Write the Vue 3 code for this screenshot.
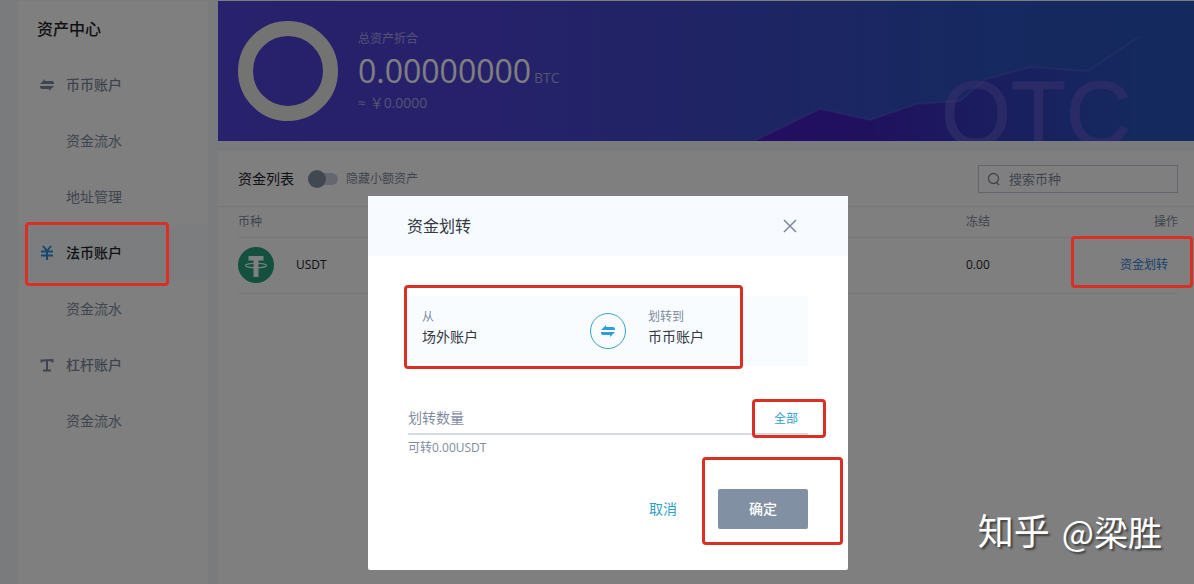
<script setup>
import { ref } from 'vue'

const menu = [
  { label: '币币账户', icon: 'swap', main: true },
  { label: '资金流水' },
  { label: '地址管理' },
  { label: '法币账户', icon: 'yen', main: true, active: true },
  { label: '资金流水' },
  { label: '杠杆账户', icon: 'lever', main: true },
  { label: '资金流水' },
]
const hideSmall = ref(false)
const keyword = ref('')
const amount = ref('')
</script>

<template>
  <div class="page">
    <nav class="sidebar" aria-label="资产中心">
      <h1 class="side-title">资产中心</h1>
      <a
        v-for="(item, i) in menu"
        :key="i"
        href="#"
        class="side-item"
        :class="{ main: item.main, active: item.active }"
      >
        <span class="side-icon">
          <svg v-if="item.icon === 'swap'" width="14" height="14" viewBox="0 0 14 14" fill="currentColor">
            <path d="M0 6 5 1v2h7Q14 3 14 5v1zM14 8 9 13v-2H2Q0 11 0 9V8z" />
          </svg>
          <svg v-else-if="item.icon === 'yen'" width="14" height="16" viewBox="0 0 14 16" fill="none" stroke="currentColor" stroke-width="2">
            <path d="M3 1l4 5 4-5M7 6v9M1 6.500h12M1 10.500h12" />
          </svg>
          <svg v-else-if="item.icon === 'lever'" width="14" height="14" viewBox="0 0 14 14" fill="none" stroke="currentColor" stroke-width="2">
            <path d="M1.500 4.500V2.500L12.500 2v2.500M7 2v10.500M3 12.500h8" />
          </svg>
        </span>
        <span>{{ item.label }}</span>
        <i v-if="item.active" class="ring ring-menu"></i>
      </a>
    </nav>

    <main class="content">
      <section class="banner">
        <svg class="trend" width="440" height="140" viewBox="0 0 440 140" aria-hidden="true">
          <defs>
            <linearGradient id="area" x1="0" x2="1" y1="0" y2="0">
              <stop offset="0" stop-color="#4a1cc4" />
              <stop offset="0.3" stop-color="#4020bc" stop-opacity="0.95" />
              <stop offset="1" stop-color="#3a2cc0" stop-opacity="0" />
            </linearGradient>
          </defs>
          <path d="M0 140 66 108 116 119 163 103 206 100 230 79 276 66 334 70 386 35V140z" fill="url(#area)" />
          <text x="187" y="144" font-size="90" fill="#5a58d0" stroke="#5a58d0" stroke-width="1" opacity="0.85">OTC</text>
          <path d="M0 140 66 108 116 119 163 103 206 100 230 79 276 66 334 70 386 35" fill="none" stroke="#a090ff" stroke-opacity="0.17" stroke-width="2" />
        </svg>
        <div class="donut"></div>
        <div class="totals">
          <div class="total-label">总资产折合</div>
          <div class="total-value">0.00000000<small>BTC</small></div>
          <div class="total-fiat">≈ ￥0.0000</div>
        </div>
      </section>

      <section class="panel">
        <div class="toolbar">
          <h2>资金列表</h2>
          <label class="switch">
            <input v-model="hideSmall" type="checkbox" />
            <span>隐藏小额资产</span>
          </label>
          <label class="search">
            <svg width="14" height="14" viewBox="0 0 14 14" fill="none" stroke="currentColor" stroke-width="1.300">
              <circle cx="6.500" cy="6.500" r="5" /><path d="M9 10l3 3" />
            </svg>
            <input v-model="keyword" type="text" placeholder="搜索币种" aria-label="搜索币种" />
          </label>
        </div>
        <table>
          <thead>
            <tr><th>币种</th><th class="frozen">冻结</th><th class="action">操作</th></tr>
          </thead>
          <tbody>
            <tr>
              <td>
                <div class="coin">
                  <svg width="36" height="36" viewBox="0 0 36 36">
                    <circle cx="18" cy="18" r="18" fill="#26a17b" />
                    <path d="M10.500 9h15v4.500H20.500V30h-5V13.500h-5z" fill="#fff" />
                    <ellipse cx="18" cy="18.500" rx="10.500" ry="2.300" fill="none" stroke="#fff" stroke-width="1.100" />
                  </svg>
                  <span>USDT</span>
                </div>
              </td>
              <td class="frozen">0.00</td>
              <td class="action">
                <a href="#">资金划转</a>
                <i class="ring ring-action"></i>
              </td>
            </tr>
          </tbody>
        </table>
      </section>
    </main>

    <div class="mask">
      <div class="dialog" role="dialog" aria-labelledby="dialog-title">
        <header class="dialog-head">
          <h2 id="dialog-title">资金划转</h2>
          <button type="button" class="close" aria-label="关闭">
            <svg width="14" height="14" viewBox="0 0 14 14" fill="none" stroke="currentColor" stroke-width="1.600">
              <path d="M1 1l12 12M13 1 1 13" />
            </svg>
          </button>
        </header>
        <div class="dialog-body">
          <div class="transfer">
            <div class="account">
              <span>从</span>
              <strong>场外账户</strong>
            </div>
            <button type="button" class="swap" aria-label="互换">
              <svg width="14" height="14" viewBox="0 0 14 14" fill="currentColor">
                <path d="M0 6 5 1v2h7Q14 3 14 5v1zM14 8 9 13v-2H2Q0 11 0 9V8z" />
              </svg>
            </button>
            <div class="account">
              <span>划转到</span>
              <strong>币币账户</strong>
            </div>
            <i class="ring ring-transfer"></i>
          </div>
          <div class="amount">
            <input v-model="amount" type="text" placeholder="划转数量" aria-label="划转数量" />
            <button type="button">全部</button>
            <i class="ring ring-all"></i>
          </div>
          <p class="hint">可转0.00USDT</p>
          <footer class="buttons">
            <button type="button" class="cancel">取消</button>
            <button type="button" class="confirm">确定<i class="ring ring-confirm"></i></button>
          </footer>
        </div>
      </div>
    </div>

    <div class="watermark"><b>知乎</b><span>@梁胜</span></div>
  </div>
</template>

<style>
body {
  margin: 0;
}
</style>

<style scoped>
* {
  box-sizing: border-box;
}
.page {
  position: relative;
  display: flex;
  gap: 10px;
  min-height: 100vh;
  padding: 1px 0 0 18px;
  overflow: hidden;
  background: #f4f6fa;
  color: #1f2329;
  font: 12px/20px "Open Sans", "Noto Sans CJK SC", sans-serif;
}
a {
  color: inherit;
  text-decoration: none;
}
h1,
h2,
p {
  margin: 0;
  font-weight: 400;
}
button,
input {
  font: inherit;
  color: inherit;
}
button {
  padding: 0;
  border: 0;
  background: none;
}
svg {
  display: block;
}
.sidebar {
  flex: 0 0 190px;
  background: #fff;
}
.side-title {
  padding-left: 19px;
  font-size: 16px;
  font-weight: 500;
  line-height: 56px;
}
.side-item {
  position: relative;
  display: flex;
  align-items: center;
  height: 56px;
  padding-left: 19px;
  color: #7f8ba1;
  font-size: 14px;
}
.side-item.main {
  font-weight: 500;
}
.side-item.active {
  background: #f6faff;
  color: #1f2329;
}
.side-icon {
  display: flex;
  justify-content: center;
  width: 20px;
  margin-right: 9px;
}
.active .side-icon {
  color: #2e8fe0;
}
.content {
  flex: 1;
  display: flex;
  flex-direction: column;
  gap: 10px;
  min-width: 0;
}
.banner {
  position: relative;
  display: flex;
  gap: 20px;
  height: 140px;
  padding: 20px;
  background: linear-gradient(90deg, #5042da 0%, #4e42d6 25%, #3c4ac8 55%, #2c52c0 80%, #2854bc 100%);
}
.trend {
  position: absolute;
  right: 0;
  bottom: 0;
  font-family: "Liberation Sans", Arial, sans-serif;
}
.donut {
  width: 100px;
  height: 100px;
  border: 15px solid #e6e6e4;
  border-radius: 50%;
}
.totals {
  padding-top: 8px;
  color: #a8a6e4;
}
.total-value {
  height: 44px;
  color: #fff;
  font-size: 32px;
  line-height: 44px;
}
.total-value small {
  margin-left: 3px;
  color: #a8a6e4;
  font-size: 14px;
  line-height: 20px;
}
.total-fiat {
  font-size: 14px;
}
.panel {
  flex: 1;
  background: #fff;
}
.toolbar {
  display: flex;
  align-items: center;
  height: 56px;
  padding: 0 16px 0 20px;
  border-bottom: 1px solid #e9ecf2;
}
.toolbar h2 {
  font-size: 14px;
}
.switch {
  display: flex;
  align-items: center;
  gap: 8px;
  margin-left: 14px;
  color: #7f8ba1;
}
.switch input {
  position: relative;
  width: 30px;
  height: 18px;
  margin: 0;
  appearance: none;
}
.switch input::before {
  content: "";
  position: absolute;
  inset: 3px 0;
  border-radius: 6px;
  background: #c9cfe0;
}
.switch input::after {
  content: "";
  position: absolute;
  left: 0;
  width: 18px;
  height: 18px;
  border-radius: 50%;
  background: #8290a3;
}
.switch input:checked::after {
  left: 12px;
}
.search {
  display: flex;
  align-items: center;
  gap: 8px;
  width: 200px;
  height: 28px;
  margin-left: auto;
  padding: 0 8px;
  border: 1px solid #c5cbd6;
  color: #7f8ba1;
  font-size: 13px;
}
.search input,
.amount input {
  flex: 1;
  min-width: 0;
  padding: 0;
  border: 0;
  outline: 0;
  background: none;
}
input::placeholder {
  color: #7f8ba1;
  opacity: 1;
}
table {
  width: calc(100% - 36px);
  margin: 0 16px 0 20px;
  border-collapse: collapse;
}
th,
td {
  padding: 0;
  border-bottom: 1px solid #eceef3;
  text-align: left;
}
th {
  height: 30px;
  color: #7f8ba1;
  font-weight: 400;
}
td {
  height: 56px;
}
.frozen {
  width: 106px;
}
.action {
  position: relative;
  width: 106px;
  text-align: right;
}
td.action {
  padding-right: 10px;
  color: #2e86d8;
}
.coin {
  display: flex;
  align-items: center;
  gap: 22px;
}
.mask {
  position: absolute;
  inset: 0;
  z-index: 10;
  display: flex;
  justify-content: center;
  align-items: flex-start;
  padding: 196px 0 14px 22px;
  background: rgba(0, 0, 0, 0.5);
}
.dialog {
  width: 480px;
  border-radius: 2px;
  background: #fff;
  color: #33373f;
}
.dialog-head {
  display: flex;
  align-items: center;
  justify-content: space-between;
  height: 60px;
  padding: 0 51px 0 39px;
  background: #f7fbff;
}
.dialog-head h2 {
  font-size: 16px;
}
.close {
  color: #7f8ba1;
}
.dialog-body {
  padding: 40px 40px 41px;
}
.transfer {
  position: relative;
  display: grid;
  grid-template-columns: 168px 36px 1fr;
  align-items: center;
  height: 70px;
  padding-left: 14px;
  background: #f9fcff;
}
.account {
  display: flex;
  flex-direction: column;
  padding-bottom: 8px;
}
.account:nth-of-type(2) {
  padding-left: 22px;
}
.account span {
  color: #7f8ba1;
}
.account strong {
  font-size: 14px;
  font-weight: 400;
}
.swap {
  display: flex;
  align-items: center;
  justify-content: center;
  height: 36px;
  border: 1px solid #369fc6;
  border-radius: 50%;
  color: #2d9fd4;
}
.amount {
  position: relative;
  display: flex;
  align-items: center;
  height: 34px;
  margin-top: 35px;
  padding-right: 10px;
  border-bottom: 2px solid #d3dce2;
  color: #2d9fca;
}
.amount input {
  height: 32px;
  font-size: 14px;
}
.amount button {
  padding-top: 4px;
}
.hint {
  margin-top: 3px;
  color: #7f8ba1;
}
.buttons {
  display: flex;
  justify-content: flex-end;
  gap: 41px;
  margin-top: 31px;
  font-size: 14px;
}
.cancel {
  color: #2d9fca;
}
.confirm {
  position: relative;
  width: 90px;
  height: 40px;
  border-radius: 2px;
  background: #8290a3;
  color: #fff;
  font-weight: 500;
}
.ring {
  position: absolute;
  z-index: 20;
  border: 3px solid #d92f25;
  border-radius: 4px;
  pointer-events: none;
}
.ring-menu {
  inset: -3px 39px -5px 7px;
}
.ring-action {
  inset: -2px -15px 5px -1px;
}
.ring-transfer {
  inset: -11px 65px -3px -4px;
}
.ring-all {
  inset: -2px -18px -5px 344px;
}
.ring-confirm {
  inset: -32px -35px -16px -16px;
}
.watermark {
  position: absolute;
  right: 32px;
  bottom: 32px;
  z-index: 30;
  display: flex;
  align-items: center;
  gap: 12px;
  color: #fff;
  font-size: 34px;
  line-height: 40px;
  text-shadow: 2px 2px 2px rgba(0, 0, 0, 0.5);
}
.watermark b {
  font-size: 36px;
  font-weight: 400;
}
.watermark span {
  font-family: "Noto Sans CJK SC", sans-serif;
}
</style>
